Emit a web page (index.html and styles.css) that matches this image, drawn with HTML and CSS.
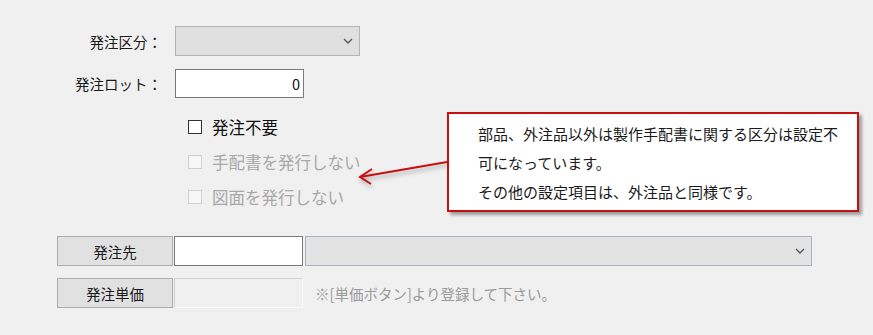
FILE: index.html
```html
<!DOCTYPE html>
<html lang="ja">
<head>
  <meta charset="UTF-8" />
  <title>発注設定</title>
  <link rel="stylesheet" href="styles.css">
</head>
<body>
  <div class="panel">
    <div class="form-row">
      <label class="field-label">発注区分：</label>
      <div class="select select-off short">
        <svg class="chev" width="10" height="6" viewBox="0 0 10 6"><polyline points="1,1 5,5 9,1" /></svg>
      </div>
    </div>
    <div class="form-row lot-row">
      <label class="field-label">発注ロット：</label>
      <div class="num-input">0</div>
    </div>

    <!-- 手配書・図面の設定 -->
    <div class="checks">
      <label class="check"><span class="box"></span>発注不要</label>
      <label class="check disabled"><span class="box"></span>手配書を発行しない</label>
      <label class="check disabled"><span class="box"></span>図面を発行しない</label>
    </div>

    <div class="supplier">
      <div class="btn-row">
        <button class="side-btn">発注先</button>
        <div class="text-input"></div>
        <div class="select wide">
          <svg class="chev" width="10" height="6" viewBox="0 0 10 6"><polyline points="1,1 5,5 9,1" /></svg>
        </div>
      </div>
      <div class="btn-row">
        <button class="side-btn">発注単価</button>
        <div class="text-input input-off"></div>
        <span class="hint">※[単価ボタン]より登録して下さい。</span>
      </div>
    </div>

    <!-- annotation -->
    <div class="callout">
      部品、外注品以外は製作手配書に関する区分は設定不<br>
      可になっています。<br>
      その他の設定項目は、外注品と同様です。
    </div>
    <svg class="arrow" width="100" height="40" viewBox="0 0 100 40">
      <line x1="97" y1="12" x2="10" y2="27" />
      <polyline points="22,19 10,27 21,34" />
    </svg>
  </div>
</body>
</html>
```

FILE: styles.css
```css
* { box-sizing: border-box; }

body {
  margin: 0;
  background: #f0f0f0;
  font-family: "Noto Sans CJK JP", "Noto Sans", sans-serif;
  color: #1e1e1e;
}

.panel {
  position: relative;
  width: 873px;
  height: 335px;
  padding-top: 26px;
  background: #f0f0f0;
}

.form-row {
  display: flex;
  align-items: center;
  gap: 13px;
}

.lot-row {
  margin-top: 13px;
}

.field-label {
  width: 162px;
  text-align: right;
  font-size: 14.5px;
  color: #1a1a1a;
}

.select {
  height: 30px;
  border: 1px solid #adadad;
  background: #e1e1e1;
  display: flex;
  align-items: center;
  justify-content: flex-end;
  padding-right: 6px;
}

.select-off {
  border-color: #b4b4b4;
  background: #e0e0e0;
}

.short { width: 185px; }

.wide {
  width: 507px;
  border-color: #a9b3bd;
  background: #e3e3e4;
}

.chev {
  fill: none;
  stroke: #555;
  stroke-width: 1.3;
}

.num-input {
  width: 129px;
  height: 29px;
  border: 1px solid #7a7a7a;
  background: #fff;
  text-align: right;
  font-size: 14.5px;
  line-height: 27px;
  padding-right: 3px;
  color: #111;
}

.checks {
  margin: 18px 0 0 188px;
  display: flex;
  flex-direction: column;
  gap: 13px;
}

.check {
  display: flex;
  align-items: center;
  height: 22px;
  font-size: 16.5px;
  color: #111;
}

.box {
  width: 14px;
  height: 14px;
  border: 1px solid #333;
  background: #fff;
  margin-right: 10px;
}

.check.disabled {
  color: #a8a8a8;
}

.check.disabled .box {
  border-color: #cfcfcf;
  background: #f7f7f7;
}

.supplier {
  margin: 28px 0 0 57px;
  display: flex;
  flex-direction: column;
  gap: 12px;
}

.btn-row {
  display: flex;
  align-items: center;
  height: 30px;
}

.side-btn {
  width: 116px;
  height: 30px;
  border: 1px solid #adadad;
  background: #e1e1e1;
  font-family: inherit;
  font-size: 14.5px;
  color: #1a1a1a;
  padding: 0;
  margin-right: 1px;
}

.text-input {
  width: 129px;
  height: 30px;
  border: 1px solid #7a7a7a;
  background: #fff;
  margin-right: 2px;
}

.input-off {
  border-color: #d2d2d2;
  border-right-color: #fafafa;
  border-bottom-color: #fafafa;
  background: #f0f0f0;
}

.hint {
  margin-left: 10px;
  font-size: 14.5px;
  color: #9a9a9a;
}

.callout {
  position: absolute;
  left: 447px;
  top: 112px;
  width: 412px;
  height: 100px;
  border: 2px solid #c80f0f;
  background: #fff;
  box-shadow: 3px 3px 3px rgba(0, 0, 0, 0.35);
  padding: 5px 0 0 29px;
  font-size: 15px;
  line-height: 29px;
  color: #1a1a1a;
}

.arrow {
  position: absolute;
  left: 350px;
  top: 150px;
  fill: none;
  stroke: #c80f0f;
  stroke-width: 2;
  filter: drop-shadow(1px 3px 2px rgba(0, 0, 0, 0.3));
}
```
